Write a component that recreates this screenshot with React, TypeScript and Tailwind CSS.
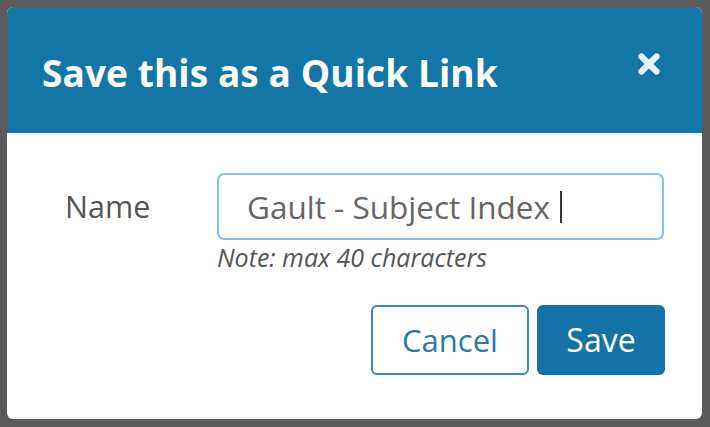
import { X } from "lucide-react"

export default function App() {
  return (
    <div className="w-[710px] h-[427px] bg-[#5b5b5b] pt-[7px] pl-[7px] pr-[8px] pb-[8px] font-['Open_Sans',sans-serif]">
      <div className="h-full bg-white rounded-[6px] overflow-hidden flex flex-col">
        <header className="h-[126px] bg-[#1376a7] flex items-center justify-between pl-[35px] pr-[38px] shrink-0">
          <h1 className="text-[37px] font-bold text-white pt-[6px] tracking-[0.1px]">Save this as a Quick Link</h1>
          <button className="text-[#e6f1f7] -mt-[12px]">
            <X size={30} strokeWidth={5} />
          </button>
        </header>
        <div className="pt-[40px] pl-[58px] pr-[38px]">
          <div className="flex items-center">
            <label className="w-[152px] text-[30.5px] text-[#555]">Name</label>
            <div className="flex-1 h-[67px] border-2 border-[#8cc0e6] rounded-[7px] flex items-center pl-[28px] text-[31.5px] text-[#666]">
              Gault - Subject Index
              <span className="ml-[10px] w-[2px] h-[32px] bg-[#333]" />
            </div>
          </div>
          <p className="ml-[152px] -mt-[1px] text-[25px] italic text-[#555] leading-[36px]">Note: max 40 characters</p>
          <div className="flex justify-end gap-[8px] mt-[30px] -mr-[1px]">
            <button className="w-[158px] h-[70px] border-2 border-[#3a88b5] rounded-[6px] text-[31px] text-[#2c7aa9]">Cancel</button>
            <button className="w-[128px] h-[70px] bg-[#1472a6] rounded-[6px] text-[32px] text-white">Save</button>
          </div>
        </div>
      </div>
    </div>
  )
}
